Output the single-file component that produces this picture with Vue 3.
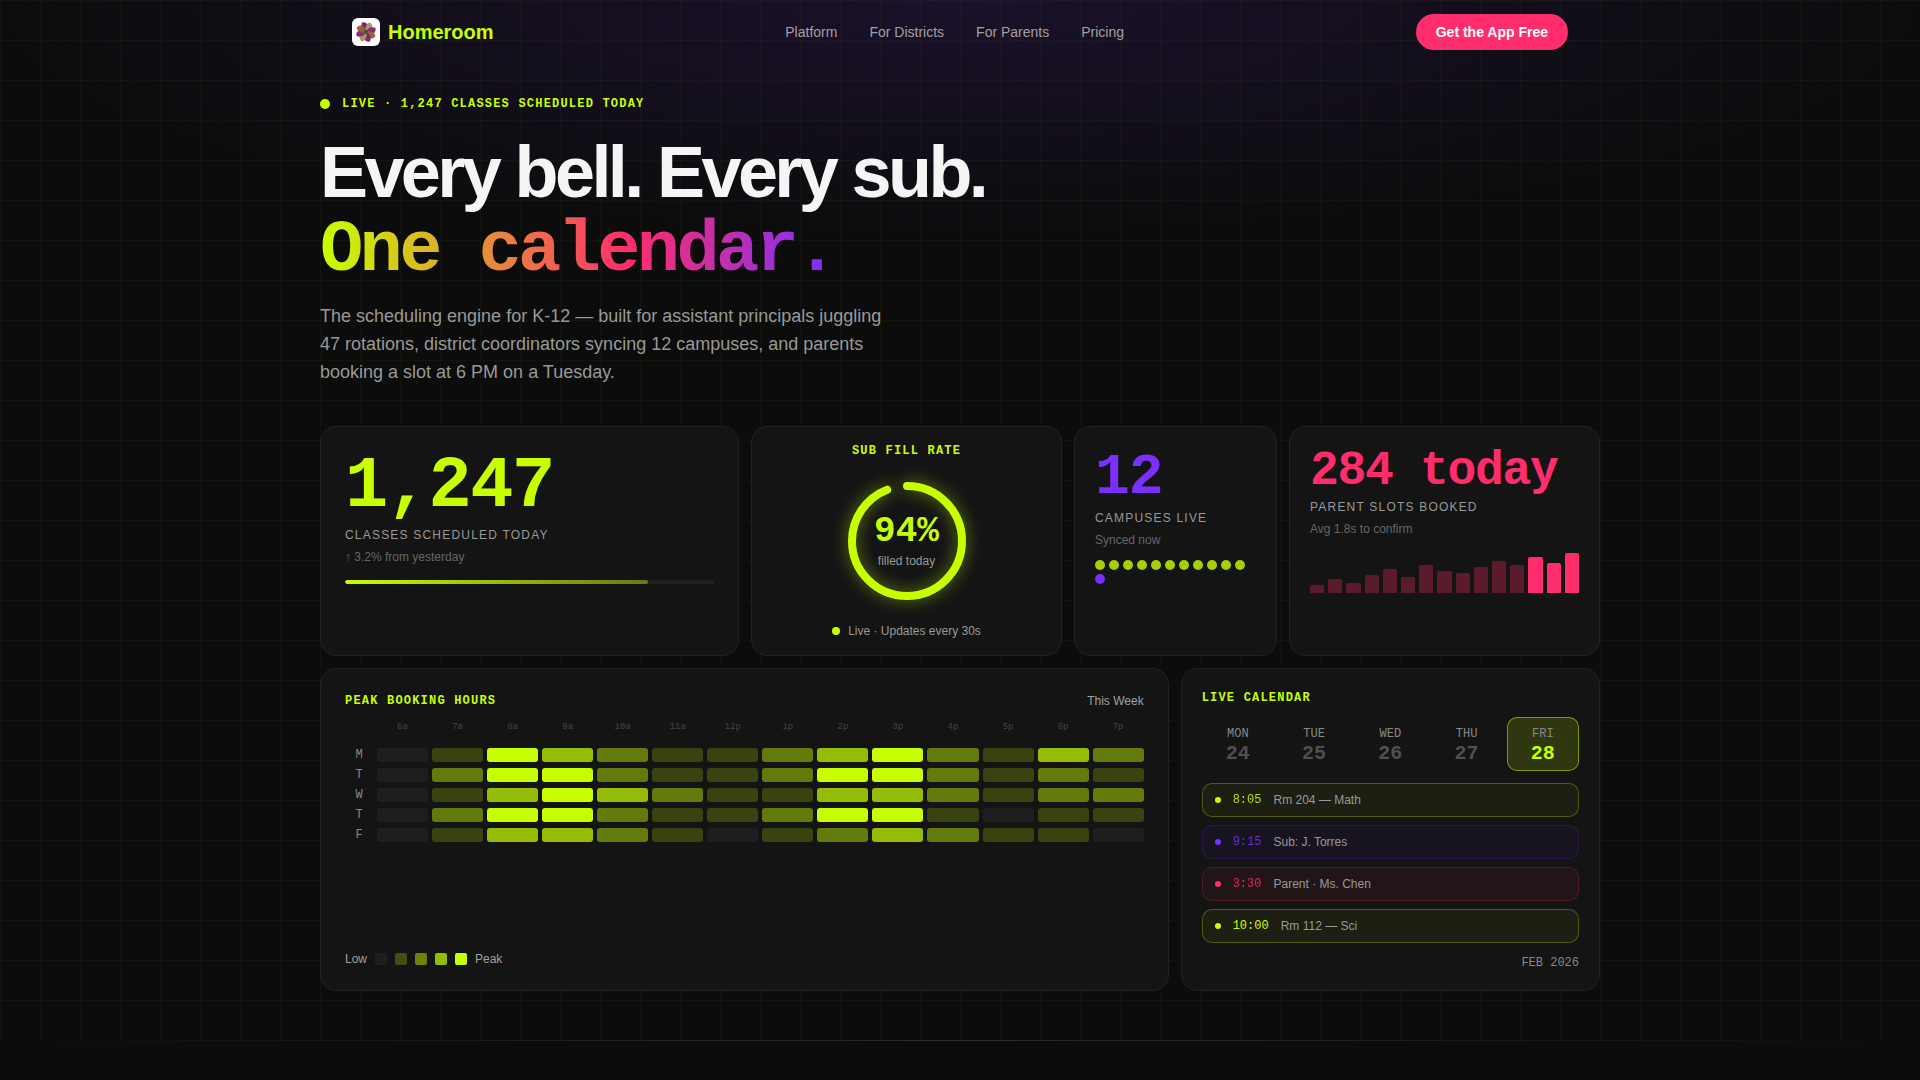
<script setup>
const links = ['Platform', 'For Districts', 'For Parents', 'Pricing']
const dots = [1, 1, 1, 1, 1, 1, 1, 1, 1, 1, 1, 0]
const bars = [8, 14, 10, 18, 24, 16, 28, 22, 20, 26, 32, 28, 36, 30, 40]
const hours = ['6a', '7a', '8a', '9a', '10a', '11a', '12p', '1p', '2p', '3p', '4p', '5p', '6p', '7p']
const heat = [
  { d: 'M', v: [0, 1, 4, 3, 2, 1, 1, 2, 3, 4, 2, 1, 3, 2] },
  { d: 'T', v: [0, 2, 4, 4, 2, 1, 1, 2, 4, 4, 2, 1, 2, 1] },
  { d: 'W', v: [0, 1, 3, 4, 3, 2, 1, 1, 3, 3, 2, 1, 2, 2] },
  { d: 'T', v: [0, 2, 4, 4, 2, 1, 1, 2, 4, 4, 1, 0, 1, 1] },
  { d: 'F', v: [0, 1, 3, 3, 2, 1, 0, 1, 2, 3, 2, 1, 1, 0] }
]
const days = [
  { l: 'MON', n: 24 },
  { l: 'TUE', n: 25 },
  { l: 'WED', n: 26 },
  { l: 'THU', n: 27 },
  { l: 'FRI', n: 28, on: true }
]
const events = [
  { c: 'lime', t: '8:05', x: 'Rm 204 — Math' },
  { c: 'purple', t: '9:15', x: 'Sub: J. Torres' },
  { c: 'pink', t: '3:30', x: 'Parent · Ms. Chen' },
  { c: 'lime', t: '10:00', x: 'Rm 112 — Sci' }
]
const blades = [0, 45, 90, 135, 180, 225, 270, 315]
const bladeFill = ['#7d2868', '#ad9463', '#8a2c6e', '#98603f']
</script>

<template>
  <div class="page">
    <div class="hero">
      <nav class="nav">
        <div class="brand">
          <span class="logo">
            <svg viewBox="0 0 28 28" width="28" height="28">
              <g v-for="(a, i) in blades" :key="a" :transform="`rotate(${a} 14 14)`">
                <path d="M14 14C11 13 8 9 10 4.500C15 3.500 18 8 14 14Z" :fill="bladeFill[i % 4]" />
              </g>
              <circle cx="14" cy="14" r="2.200" fill="#3f5a34" />
            </svg>
          </span>
          <span class="brand-name">Homeroom</span>
        </div>
        <div class="links">
          <a v-for="l in links" :key="l" class="link">{{ l }}</a>
        </div>
        <button class="cta">Get the App Free</button>
      </nav>

      <main class="main">
        <div class="badge"><span class="badge-dot"></span>LIVE · 1,247 CLASSES SCHEDULED TODAY</div>
        <h1 class="title">
          <span class="line">Every bell. Every sub.</span>
          <span class="line grad">One calendar.</span>
        </h1>
        <p class="lead">The scheduling engine for K-12 — built for assistant principals juggling 47 rotations, district coordinators syncing 12 campuses, and parents booking a slot at 6 PM on a Tuesday.</p>

        <section class="row-top">
          <article class="card pad24">
            <div class="num big lime">1,247</div>
            <div class="label">CLASSES SCHEDULED TODAY</div>
            <div class="sub">↑ 3.2% from yesterday</div>
            <div class="track"><div class="fill"></div></div>
          </article>

          <article class="card ringcard">
            <div class="eyebrow">SUB FILL RATE</div>
            <div class="ring">
              <svg viewBox="0 0 120 120" width="120" height="120" class="ring-svg">
                <circle cx="60" cy="60" r="55" fill="none" stroke="#c8ff00" stroke-width="8" stroke-linecap="round"
                  stroke-dasharray="324.8 345.6" transform="rotate(-90 60 60)" />
              </svg>
              <div class="ring-text">
                <div class="ring-num">94%</div>
                <div class="ring-sub">filled today</div>
              </div>
            </div>
            <div class="ring-foot"><span class="foot-dot"></span>Live · Updates every 30s</div>
          </article>

          <article class="card pad20 campus">
            <div class="num mid purple">12</div>
            <div class="label">CAMPUSES LIVE</div>
            <div class="sub">Synced now</div>
            <div class="dots">
              <span v-for="(d, i) in dots" :key="i" class="dot" :class="d ? 'dot-lime' : 'dot-purple'"></span>
            </div>
          </article>

          <article class="card pad20">
            <div class="num small pink">284 today</div>
            <div class="label">PARENT SLOTS BOOKED</div>
            <div class="sub">Avg 1.8s to confirm</div>
            <div class="bars">
              <span v-for="(b, i) in bars" :key="i" class="bar" :class="{ hot: i > 11 }" :style="{ height: b + 'px' }"></span>
            </div>
          </article>
        </section>

        <section class="row-bottom">
          <article class="card heatcard">
            <div class="heat-head">
              <div class="eyebrow">PEAK BOOKING HOURS</div>
              <div class="week">This Week</div>
            </div>
            <div class="heatgrid">
              <span></span>
              <span v-for="h in hours" :key="h" class="hour">{{ h }}</span>
              <template v-for="(r, ri) in heat" :key="ri">
                <span class="daylabel">{{ r.d }}</span>
                <span v-for="(v, ci) in r.v" :key="ci" class="cell" :class="'l' + v"></span>
              </template>
            </div>
            <div class="legend">
              <span>Low</span>
              <span class="sw l0"></span>
              <span class="sw s1"></span>
              <span class="sw s2"></span>
              <span class="sw s3"></span>
              <span class="sw l4"></span>
              <span>Peak</span>
            </div>
          </article>

          <article class="card calcard">
            <div class="eyebrow left">LIVE CALENDAR</div>
            <div class="days">
              <div v-for="d in days" :key="d.n" class="day" :class="{ on: d.on }">
                <div class="day-l">{{ d.l }}</div>
                <div class="day-n">{{ d.n }}</div>
              </div>
            </div>
            <div class="events">
              <div v-for="e in events" :key="e.t" class="event" :class="'ev-' + e.c">
                <span class="ev-dot"></span>
                <span class="ev-time">{{ e.t }}</span>
                <span class="ev-text">{{ e.x }}</span>
              </div>
            </div>
            <div class="month">FEB 2026</div>
          </article>
        </section>
      </main>
    </div>
    <footer class="foot"></footer>
  </div>
</template>

<style>
html, body { margin: 0; background: #0c0c0c; }
</style>

<style scoped>
.page {
  font-family: "Liberation Sans", Arial, sans-serif;
  color: #f5f5f5;
  background: #0c0c0c;
}
.hero {
  height: 1040px;
  box-sizing: border-box;
  background-image:
    radial-gradient(ellipse 1000px 240px at 50% 0, rgba(123, 47, 255, 0.13), transparent 100%),
    linear-gradient(rgba(200, 255, 0, 0.03) 1px, transparent 1px),
    linear-gradient(90deg, rgba(200, 255, 0, 0.03) 1px, transparent 1px);
  background-size: 100% 100%, 40px 40px, 40px 40px;
}
.nav {
  width: 1216px;
  height: 64px;
  margin: 0 auto;
  display: flex;
  align-items: center;
  justify-content: space-between;
}
.brand { display: flex; align-items: center; gap: 8px; }
.logo {
  width: 28px;
  height: 28px;
  border-radius: 6px;
  background: #fff;
  display: block;
  overflow: hidden;
}
.logo svg { display: block; }
.brand-name { font-size: 20px; font-weight: 700; color: #c8ff00; }
.links { display: flex; gap: 32px; }
.link { font-size: 14px; color: #a0a0a0; }
.cta {
  height: 36px;
  padding: 0 20px;
  border: 0;
  border-radius: 999px;
  background: #ff2d6b;
  color: #fff;
  font: 700 14px "Liberation Sans", Arial, sans-serif;
}
.main { width: 1280px; margin: 0 auto; }
.badge {
  margin-top: 33px;
  display: flex;
  align-items: center;
  gap: 12px;
  font: 700 12px/14px "Liberation Mono", monospace;
  letter-spacing: 0.1em;
  color: #c8ff00;
}
.badge-dot { width: 10px; height: 10px; border-radius: 50%; background: #c8ff00; }
.title {
  margin: 22px 0 0;
  font-size: 72px;
  font-weight: 700;
  line-height: 79px;
  letter-spacing: -0.05em;
}
.line { display: block; }
.grad {
  font-family: "Liberation Mono", monospace;
  width: max-content;
  background: linear-gradient(90deg, #c8ff00, #ff2d6b 60%, #7b2fff);
  -webkit-background-clip: text;
  background-clip: text;
  color: transparent;
}
.lead {
  margin: 11px 0 0;
  width: 580px;
  font-size: 18px;
  line-height: 28px;
  color: #999;
}
.row-top {
  margin-top: 40px;
  display: grid;
  grid-template-columns: 419fr 311fr 203fr 311fr;
  gap: 12px;
}
.row-top > .card { height: 230px; }
.row-bottom {
  margin-top: 12px;
  display: grid;
  grid-template-columns: 848fr 419fr;
  gap: 12px;
}
.row-bottom > .card { height: 323px; }
.card {
  box-sizing: border-box;
  background: #141414;
  border: 1px solid #222;
  border-radius: 16px;
  min-width: 0;
}
.pad24 { padding: 24px; }
.pad20 { padding: 20px; }
.campus { padding-top: 22px; }
.num { font-family: "Liberation Mono", monospace; font-weight: 700; letter-spacing: -0.02em; }
.big { font-size: 72px; line-height: 73px; }
.mid { font-size: 58px; line-height: 58px; }
.small { font-size: 48px; line-height: 49px; letter-spacing: -0.027em; }
.lime { color: #c8ff00; }
.purple { color: #7b2fff; }
.pink { color: #ff2d6b; }
.label {
  margin-top: 4px;
  font-size: 12px;
  line-height: 14px;
  letter-spacing: 0.1em;
  color: #999;
}
.sub { margin-top: 8px; font-size: 12px; line-height: 14px; color: #666; }
.track { margin-top: 16px; height: 4px; border-radius: 2px; background: #222; overflow: hidden; }
.fill {
  width: 82%;
  height: 100%;
  border-radius: 2px;
  background: linear-gradient(90deg, #c8ff00, rgba(200, 255, 0, 0.4));
}
.ringcard {
  padding: 17px 16px;
  display: flex;
  flex-direction: column;
  align-items: center;
  justify-content: space-between;
}
.eyebrow {
  font: 700 12px/14px "Liberation Mono", monospace;
  letter-spacing: 0.1em;
  color: #c8ff00;
}
.ring { position: relative; width: 120px; height: 120px; }
.ring-svg { display: block; filter: drop-shadow(0 0 8px rgba(200, 255, 0, 0.5)); }
.ring-text {
  position: absolute;
  inset: 0;
  display: flex;
  flex-direction: column;
  align-items: center;
  justify-content: center;
  gap: 4px;
}
.ring-num { font: 700 36px/36px "Liberation Mono", monospace; color: #c8ff00; }
.ring-sub { font-size: 12px; line-height: 14px; color: #999; }
.ring-foot {
  display: flex;
  align-items: center;
  gap: 8px;
  font-size: 12px;
  line-height: 14px;
  color: #999;
}
.foot-dot { width: 8px; height: 8px; border-radius: 50%; background: #c8ff00; }
.dots { margin-top: 13px; display: flex; flex-wrap: wrap; gap: 4px; }
.dot { width: 10px; height: 10px; border-radius: 50%; }
.dot-lime { background: #c8ff00; opacity: 0.8; }
.dot-purple { background: #7b2fff; }
.bars { margin-top: 17px; height: 40px; display: flex; align-items: flex-end; gap: 4px; }
.bar { flex: 1; border-radius: 2px 2px 0 0; background: #ff2d6b; opacity: 0.3; }
.bar.hot { opacity: 1; }
.heatcard { padding: 25px 24px 24px; display: flex; flex-direction: column; }
.heat-head { display: flex; justify-content: space-between; align-items: center; }
.week { font-size: 12px; line-height: 14px; color: #a0a0a0; }
.heatgrid {
  margin-top: 12px;
  display: grid;
  grid-template-columns: 28px repeat(14, 1fr);
  grid-template-rows: 22px repeat(5, 14px);
  column-gap: 4px;
  row-gap: 6px;
}
.hour {
  font: 9px/14px "Liberation Mono", monospace;
  color: #444;
  text-align: center;
}
.daylabel { font: 12px/14px "Liberation Mono", monospace; color: #888; text-align: center; }
.cell { border-radius: 3px; }
.l0 { background: #1e1e1e; }
.l1 { background: rgba(200, 255, 0, 0.2); }
.l2 { background: rgba(200, 255, 0, 0.44); }
.l3 { background: rgba(200, 255, 0, 0.72); }
.l4 { background: #c8ff00; }
.legend {
  margin-top: auto;
  display: flex;
  align-items: center;
  gap: 8px;
  font-size: 12px;
  line-height: 14px;
  color: #a0a0a0;
}
.sw { width: 12px; height: 12px; border-radius: 2px; }
.s1 { background: rgba(200, 255, 0, 0.25); }
.s2 { background: rgba(200, 255, 0, 0.48); }
.s3 { background: rgba(200, 255, 0, 0.72); }
.calcard { padding: 22px 20px 20px; }
.days { margin-top: 12px; display: flex; gap: 4px; }
.day {
  flex: 1;
  height: 54px;
  box-sizing: border-box;
  padding-top: 3px;
  border: 1px solid transparent;
  border-radius: 10px;
  display: flex;
  flex-direction: column;
  align-items: center;
  justify-content: center;
  gap: 1px;
  font-family: "Liberation Mono", monospace;
}
.day-l { font-size: 12px; line-height: 14px; color: #888; }
.day-n { font-size: 20px; line-height: 23px; font-weight: 700; color: #505050; }
.day.on { background: rgba(200, 255, 0, 0.15); border-color: rgba(200, 255, 0, 0.5); }
.day.on .day-n { color: #c8ff00; }
.events { margin-top: 12px; display: flex; flex-direction: column; gap: 8px; }
.event {
  height: 34px;
  box-sizing: border-box;
  padding: 0 12px;
  border: 1px solid;
  border-radius: 10px;
  display: flex;
  align-items: center;
  gap: 12px;
  font-size: 12px;
}
.ev-dot { width: 6px; height: 6px; border-radius: 50%; }
.ev-time { font-family: "Liberation Mono", monospace; }
.event:not(:last-child) .ev-time { opacity: 0.85; }
.ev-text { color: #999; }
.ev-lime { background: rgba(200, 255, 0, 0.05); border-color: rgba(200, 255, 0, 0.28); }
.ev-lime .ev-dot { background: #c8ff00; }
.ev-lime .ev-time { color: #c8ff00; }
.ev-purple { background: rgba(123, 47, 255, 0.05); border-color: rgba(123, 47, 255, 0.18); }
.ev-purple .ev-dot { background: #7b2fff; }
.ev-purple .ev-time { color: #7b2fff; }
.ev-pink { background: rgba(255, 45, 107, 0.06); border-color: rgba(255, 45, 107, 0.2); }
.ev-pink .ev-dot { background: #ff2d6b; }
.ev-pink .ev-time { color: #ff2d6b; }
.month {
  margin-top: 13px;
  font: 12px/14px "Liberation Mono", monospace;
  color: #888;
  text-align: right;
}
.foot {
  height: 40px;
  background: linear-gradient(90deg, transparent, #2c2c2c, transparent) top / 100% 1px no-repeat;
}
</style>
